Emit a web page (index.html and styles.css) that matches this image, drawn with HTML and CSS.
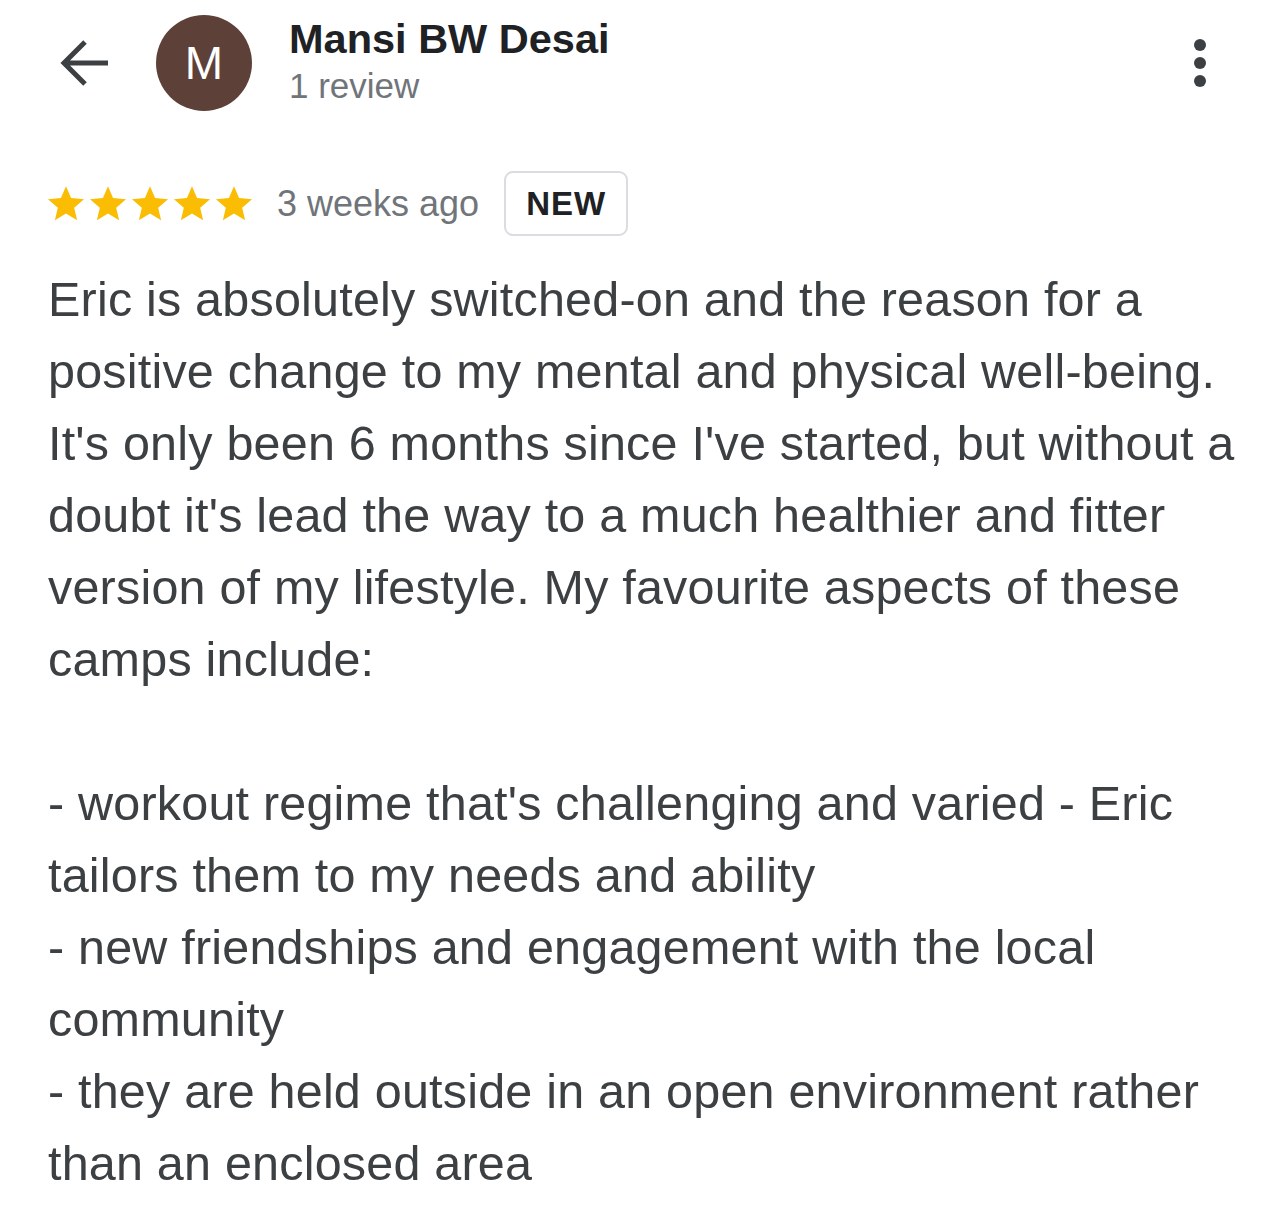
FILE: index.html
```html
<!DOCTYPE html>
<html lang="en">
<head>
    <meta charset="UTF-8">
    <title>Review - Mansi BW Desai</title>
    <link rel="stylesheet" href="styles.css">
</head>
<body>

    <header class="top-bar">
        <a href="#" class="back-button" aria-label="Back">
            <svg width="52" height="52" viewBox="0 0 52 52">
                <path d="M6 26H50M27 5L6 26 27 47" fill="none" stroke="#3c4043" stroke-width="5"/>
            </svg>
        </a>
        <div class="avatar">M</div>
        <div class="author">
            <div class="author-name">Mansi BW Desai</div>
            <div class="author-meta">1 review</div>
        </div>
        <button class="more-button" aria-label="More options">
            <span class="dot"></span>
            <span class="dot"></span>
            <span class="dot"></span>
        </button>
    </header>

    <section class="review">
        <div class="review-info">
            <div class="stars">
                <svg class="star" viewBox="2 2 20 19.3"><path d="M12 17.27L18.18 21l-1.64-7.03L22 9.24l-7.19-.61L12 2 9.19 8.63 2 9.24l5.46 4.73L5.82 21z"/></svg>
                <svg class="star" viewBox="2 2 20 19.3"><path d="M12 17.27L18.18 21l-1.64-7.03L22 9.24l-7.19-.61L12 2 9.19 8.63 2 9.24l5.46 4.73L5.82 21z"/></svg>
                <svg class="star" viewBox="2 2 20 19.3"><path d="M12 17.27L18.18 21l-1.64-7.03L22 9.24l-7.19-.61L12 2 9.19 8.63 2 9.24l5.46 4.73L5.82 21z"/></svg>
                <svg class="star" viewBox="2 2 20 19.3"><path d="M12 17.27L18.18 21l-1.64-7.03L22 9.24l-7.19-.61L12 2 9.19 8.63 2 9.24l5.46 4.73L5.82 21z"/></svg>
                <svg class="star" viewBox="2 2 20 19.3"><path d="M12 17.27L18.18 21l-1.64-7.03L22 9.24l-7.19-.61L12 2 9.19 8.63 2 9.24l5.46 4.73L5.82 21z"/></svg>
            </div>
            <span class="review-date">3 weeks ago</span>
            <span class="badge">NEW</span>
        </div>

        <p class="review-text">Eric is absolutely switched-on and the reason for a positive change to my mental and physical well-being. It's only been 6 months since I've started, but without a doubt it's lead the way to a much healthier and fitter version of my lifestyle. My favourite aspects of these camps include:

- workout regime that's challenging and varied - Eric tailors them to my needs and ability
- new friendships and engagement with the local community
- they are held outside in an open environment rather than an enclosed area</p>
    </section>

</body>
</html>
```

FILE: styles.css
```css
body {
    font-family: "Liberation Sans", Arial, sans-serif;
    margin: 0;
    padding: 0;
    background-color: #fff;
    color: #3c4043;
}

.top-bar {
    display: flex;
    align-items: center;
    padding: 15px 78px 0 58px;
}

.back-button {
    display: flex;
    width: 52px;
    height: 52px;
}

.avatar {
    width: 96px;
    height: 96px;
    border-radius: 50%;
    background-color: #5d4037;
    color: #fff;
    font-size: 46px;
    display: flex;
    align-items: center;
    justify-content: center;
    margin-left: 46px;
    flex-shrink: 0;
}

.author {
    margin-left: 37px;
    flex: 1;
    align-self: flex-start;
}

.author-name {
    font-size: 41.5px;
    font-weight: bold;
    color: #202124;
    line-height: 48px;
}

.author-meta {
    font-size: 35px;
    color: #70757a;
    line-height: 46px;
}

.more-button {
    background: none;
    border: none;
    padding: 0;
    display: flex;
    flex-direction: column;
    align-items: center;
    gap: 6px;
    width: 12px;
}

.dot {
    width: 12px;
    height: 12px;
    border-radius: 50%;
    background-color: #3c4043;
}

.review {
    padding: 0 36px 0 48px;
}

.review-info {
    display: flex;
    align-items: center;
    margin-top: 60px;
}

.stars {
    display: flex;
    gap: 6px;
}

.star {
    width: 36px;
    height: 35px;
    fill: #fbbc04;
}

.review-date {
    font-size: 36px;
    color: #70757a;
    margin-left: 25px;
}

.badge {
    margin-left: 25px;
    border: 2px solid #dadce0;
    border-radius: 9px;
    padding: 0 20px;
    height: 61px;
    display: flex;
    align-items: center;
    font-size: 33px;
    font-weight: bold;
    letter-spacing: 1px;
    color: #202124;
}

.review-text {
    font-size: 48.5px;
    line-height: 72px;
    letter-spacing: 0.2px;
    white-space: pre-line;
    margin: 27px 0 0;
}
```
